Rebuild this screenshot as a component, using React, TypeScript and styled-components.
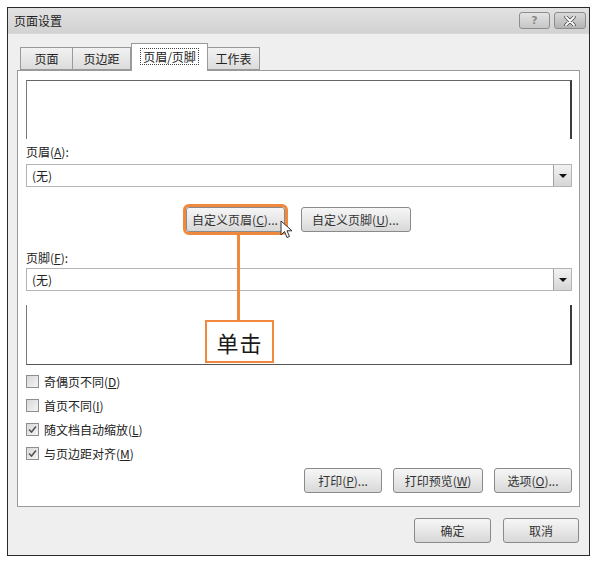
import React from 'react'
import styled, { createGlobalStyle } from 'styled-components'

const GlobalStyle = createGlobalStyle`
  html, body {
    margin: 0;
    padding: 0;
    background: #ffffff;
  }
  body {
    font-family: "Noto Sans CJK SC", "Noto Sans", "Liberation Sans", sans-serif;
    font-size: 12px;
    color: #222;
  }
`

const Page = styled.div`
  padding: 7px 0 0 7px;
`

const Dialog = styled.div`
  width: 583px;
  height: 549px;
  box-sizing: border-box;
  border: 1px solid #2a2a2a;
  background: #efefef;
  display: flex;
  flex-direction: column;
`

const TitleBar = styled.div`
  height: 25px;
  display: flex;
  align-items: center;
  justify-content: space-between;
  padding: 0 3px 0 6px;
  background: linear-gradient(#e2e2e2, #d2d2d2);
  border-bottom: 1px solid #d8d8d8;
`

const TitleText = styled.span`
  font-size: 12px;
  color: #1e1e1e;
`

const TitleButtons = styled.div`
  display: flex;
  gap: 4px;
`

const CaptionButton = styled.div<{ $close?: boolean }>`
  width: ${(p) => (p.$close ? 32 : 31)}px;
  height: 17px;
  box-sizing: border-box;
  border: 1px solid #8d8d8d;
  border-radius: 3px;
  background: ${(p) =>
    p.$close
      ? 'linear-gradient(#d9d9d9, #b4b4b4)'
      : 'linear-gradient(#e4e4e4, #c6c6c6)'};
  display: flex;
  align-items: center;
  justify-content: center;
  font-family: "DejaVu Sans", sans-serif;
  font-size: 11px;
  font-weight: bold;
  color: #8a8a8a;
`

const Body = styled.div`
  flex: 1;
  display: flex;
  flex-direction: column;
  padding: 9px 9px 0 9px;
`

const TabRow = styled.div`
  display: flex;
  align-items: flex-end;
  padding-left: 3px;
  height: 27px;
  position: relative;
  z-index: 1;
`

const Tab = styled.div<{ $active?: boolean; $w: number }>`
  width: ${(p) => p.$w}px;
  height: ${(p) => (p.$active ? 28 : 23)}px;
  box-sizing: border-box;
  border: 1px solid #9a9a9a;
  border-left-width: ${(p) => (p.$active ? 1 : 0)}px;
  border-bottom: ${(p) => (p.$active ? 'none' : '1px solid #9a9a9a')};
  background: ${(p) => (p.$active ? '#ffffff' : 'linear-gradient(#f2f2f2, #dcdcdc)')};
  display: flex;
  align-items: center;
  justify-content: center;
  margin-bottom: ${(p) => (p.$active ? -1 : 0)}px;
  padding-bottom: ${(p) => (p.$active ? 2 : 0)}px;
  &:first-child {
    border-left-width: 1px;
  }
`

const FocusLabel = styled.span`
  border: 1px dotted #444;
  padding: 0 2px;
  line-height: 15px;
`

const Panel = styled.div`
  position: relative;
  width: 563px;
  height: 437px;
  box-sizing: border-box;
  border: 1px solid #9a9a9a;
  background: #ffffff;
  padding: 0 7px 0 8px;
  display: flex;
  flex-direction: column;
`

const Preview = styled.div<{ $edge: 'top' | 'bottom' }>`
  height: ${(p) => (p.$edge === 'top' ? 59 : 60)}px;
  margin-top: ${(p) => (p.$edge === 'top' ? 9 : 14)}px;
  box-sizing: border-box;
  border-left: 1px solid #7a7a7a;
  border-right: 2px solid #3c3c3c;
  ${(p) =>
    p.$edge === 'top' ? 'border-top: 1px solid #666;' : 'border-bottom: 1px solid #555;'}
`

const FieldLabel = styled.div<{ $gap: number }>`
  margin-top: ${(p) => p.$gap}px;
  height: 16px;
  line-height: 16px;
`

const Underline = styled.span`
  text-decoration: underline;
`

const Select = styled.div<{ $gap: number }>`
  margin-top: ${(p) => p.$gap}px;
  height: 23px;
  box-sizing: border-box;
  border: 1px solid #b4b4b4;
  display: flex;
  align-items: center;
  justify-content: space-between;
  padding-left: 5px;
`

const DropButton = styled.div`
  width: 18px;
  height: 21px;
  box-sizing: border-box;
  border-left: 1px solid #a0a0a0;
  background: linear-gradient(#f2f2f2, #d6d6d6);
  display: flex;
  align-items: center;
  justify-content: center;
`

const Arrow = styled.div`
  width: 0;
  height: 0;
  border-left: 4px solid transparent;
  border-right: 4px solid transparent;
  border-top: 4px solid #111;
`

const CustomRow = styled.div`
  margin-top: 19px;
  height: 26px;
  display: flex;
  align-items: center;
  justify-content: center;
  gap: 16px;
  padding-right: 2px;
`

const Button = styled.div<{ $w: number; $highlight?: boolean }>`
  width: ${(p) => p.$w}px;
  height: 25px;
  box-sizing: border-box;
  border: 1px solid #8a8a8a;
  border-radius: 3px;
  background: linear-gradient(#f6f6f6 0%, #e8e8e8 50%, #d8d8d8 100%);
  display: flex;
  align-items: center;
  justify-content: center;
  color: #333;
  white-space: nowrap;
  ${(p) =>
    p.$highlight
      ? 'outline: 3px solid #f0883e; outline-offset: 0px; border-radius: 3px;'
      : ''}
`

const CheckList = styled.div`
  margin-top: 4px;
  display: flex;
  flex-direction: column;
`

const CheckRow = styled.div`
  height: 24px;
  display: flex;
  align-items: center;
  gap: 5px;
`

const Box = styled.div`
  width: 13px;
  height: 13px;
  box-sizing: border-box;
  border: 1px solid #8e8e8e;
  background: linear-gradient(135deg, #d8d8d8, #f4f4f4);
  display: flex;
  align-items: center;
  justify-content: center;
`

const PanelButtons = styled.div`
  margin-top: 3px;
  display: flex;
  justify-content: flex-end;
  gap: 11px;
`

const Footer = styled.div`
  display: flex;
  justify-content: flex-end;
  gap: 12px;
  padding: 11px 1px 0 0;
`

const Connector = styled.div`
  position: absolute;
  left: 219px;
  top: 161px;
  width: 3px;
  height: 89px;
  background: #f0883e;
`

const Callout = styled.div`
  position: absolute;
  left: 187px;
  top: 249px;
  width: 69px;
  height: 43px;
  box-sizing: border-box;
  border: 2px solid #f0883e;
  background: #ffffff;
  display: flex;
  align-items: center;
  justify-content: center;
  font-size: 22px;
  letter-spacing: 1px;
  color: #1a1a1a;
`

const Pointer = styled.svg`
  position: absolute;
  left: 262px;
  top: 149px;
`

function Check({ on }: { on?: boolean }) {
  return (
    <Box>
      {on && (
        <svg width="9" height="9" viewBox="0 0 9 9">
          <path d="M1 4.5 L3.5 7 L8 1.5" stroke="#555" strokeWidth="1.6" fill="none" />
        </svg>
      )}
    </Box>
  )
}

export default function App() {
  return (
    <Page>
      <GlobalStyle />
      <Dialog>
        <TitleBar>
          <TitleText>页面设置</TitleText>
          <TitleButtons>
            <CaptionButton>?</CaptionButton>
            <CaptionButton $close>
              <svg width="12" height="10" viewBox="0 0 12 10">
                <path d="M2 1 L10 9 M10 1 L2 9" stroke="#4a4a4a" strokeWidth="3.4" strokeLinecap="round" />
                <path d="M2 1 L10 9 M10 1 L2 9" stroke="#ffffff" strokeWidth="1.8" strokeLinecap="round" />
              </svg>
            </CaptionButton>
          </TitleButtons>
        </TitleBar>
        <Body>
          <TabRow>
            <Tab $w={53}>页面</Tab>
            <Tab $w={58}>页边距</Tab>
            <Tab $w={77} $active>
              <FocusLabel>页眉/页脚</FocusLabel>
            </Tab>
            <Tab $w={52}>工作表</Tab>
          </TabRow>
          <Panel>
            <Preview $edge="top" />
            <FieldLabel $gap={5}>
              页眉(<Underline>A</Underline>):
            </FieldLabel>
            <Select $gap={4}>
              <span>(无)</span>
              <DropButton>
                <Arrow />
              </DropButton>
            </Select>
            <CustomRow>
              <Button $w={99} $highlight>
                自定义页眉(<Underline>C</Underline>)...
              </Button>
              <Button $w={110}>
                自定义页脚(<Underline>U</Underline>)...
              </Button>
            </CustomRow>
            <FieldLabel $gap={18}>
              页脚(<Underline>F</Underline>):
            </FieldLabel>
            <Select $gap={2}>
              <span>(无)</span>
              <DropButton>
                <Arrow />
              </DropButton>
            </Select>
            <Preview $edge="bottom" />
            <CheckList>
              <CheckRow>
                <Check />
                <span>
                  奇偶页不同(<Underline>D</Underline>)
                </span>
              </CheckRow>
              <CheckRow>
                <Check />
                <span>
                  首页不同(<Underline>I</Underline>)
                </span>
              </CheckRow>
              <CheckRow>
                <Check on />
                <span>
                  随文档自动缩放(<Underline>L</Underline>)
                </span>
              </CheckRow>
              <CheckRow>
                <Check on />
                <span>
                  与页边距对齐(<Underline>M</Underline>)
                </span>
              </CheckRow>
            </CheckList>
            <PanelButtons>
              <Button $w={78}>
                打印(<Underline>P</Underline>)...
              </Button>
              <Button $w={90}>
                打印预览(<Underline>W</Underline>)
              </Button>
              <Button $w={78}>
                选项(<Underline>O</Underline>)...
              </Button>
            </PanelButtons>
            <Connector />
            <Callout>单击</Callout>
            <Pointer width="14" height="20" viewBox="0 0 14 20">
              <path
                d="M1 1 L1 15 L4.5 11.5 L7 17.5 L9.5 16.5 L7 10.8 L12 10.8 Z"
                fill="#ffffff"
                stroke="#333"
                strokeWidth="1"
                strokeLinejoin="round"
              />
            </Pointer>
          </Panel>
          <Footer>
            <Button $w={77}>确定</Button>
            <Button $w={76}>取消</Button>
          </Footer>
        </Body>
      </Dialog>
    </Page>
  )
}
